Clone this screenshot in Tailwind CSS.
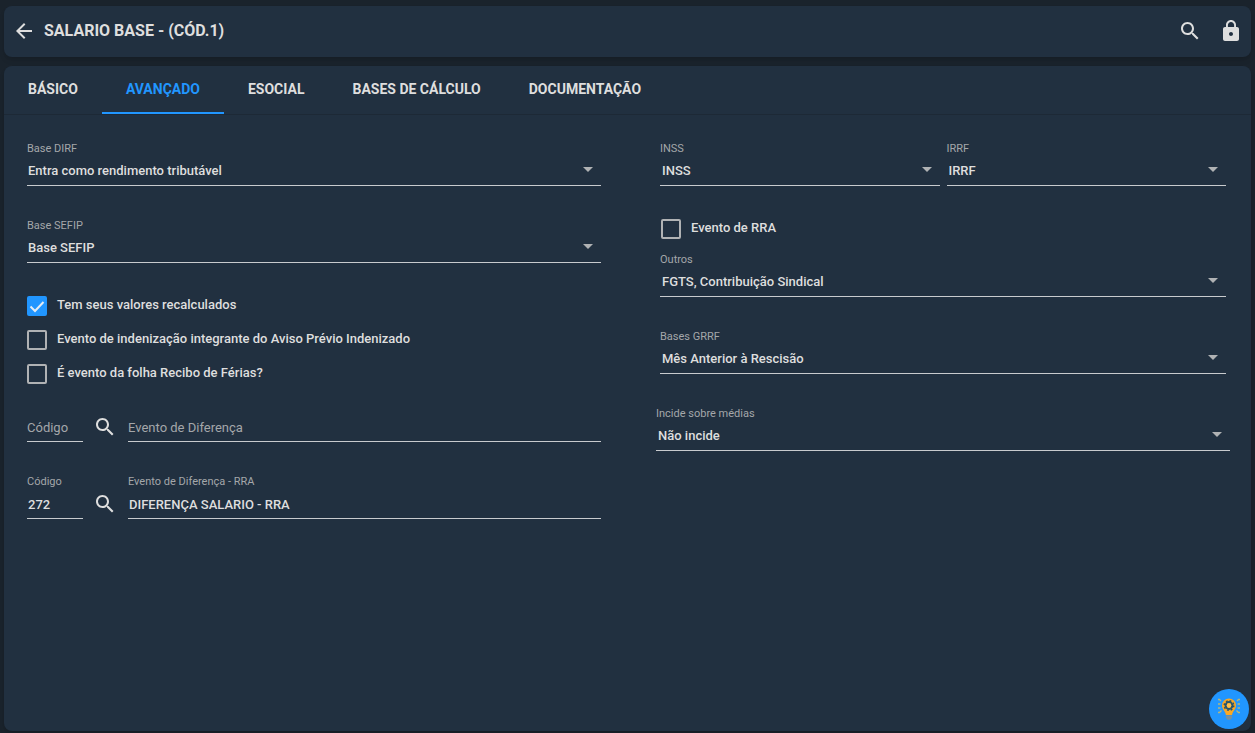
<!DOCTYPE html>
<html lang="pt-BR">
<head>
  <meta charset="UTF-8">
  <meta name="viewport" content="width=device-width, initial-scale=1.0">
  <title>Salario Base</title>
  <script src="https://cdn.jsdelivr.net/npm/@tailwindcss/browser@4"></script>
</head>
<body class="bg-[#1a232c] text-[#dedede] font-['Roboto',sans-serif] text-[13px] min-h-screen flex flex-col gap-[9px] px-1 pt-1.5 pb-0.5">

<header class="h-[51px] shrink-0 flex items-center bg-[#213040] rounded-lg shadow-md px-2 pb-0.5">
  <button type="button" aria-label="Voltar">
    <svg class="w-6 h-6" viewBox="0 0 24 24" fill="currentColor"><path d="M20 11H7.83l5.59-5.59L12 4l-8 8 8 8 1.41-1.41L7.83 13H20v-2z"/></svg>
  </button>
  <h1 class="ml-2 text-base leading-6 font-bold">SALARIO BASE - (CÓD.1)</h1>
  <div class="ml-auto flex gap-[17px]">
    <button type="button" aria-label="Pesquisar">
      <svg class="w-6 h-6" viewBox="0 0 24 24" fill="currentColor"><path d="M15.5 14h-.79l-.28-.27C15.41 12.59 16 11.11 16 9.5 16 5.91 13.09 3 9.5 3S3 5.91 3 9.5 5.91 16 9.5 16c1.61 0 3.09-.59 4.23-1.57l.27.28v.79l5 4.99L20.49 19l-4.99-5zm-6 0C7.01 14 5 11.99 5 9.5S7.01 5 9.5 5 14 7.01 14 9.5 11.99 14 9.5 14z"/></svg>
    </button>
    <button type="button" aria-label="Bloquear">
      <svg class="w-6 h-6" viewBox="0 0 24 24" fill="currentColor"><path d="M18 8h-1V6c0-2.76-2.24-5-5-5S7 3.24 7 6v2H6c-1.1 0-2 .9-2 2v10c0 1.1.9 2 2 2h12c1.1 0 2-.9 2-2V10c0-1.1-.9-2-2-2zm-6 9c-1.1 0-2-.9-2-2s.9-2 2-2 2 .9 2 2-.9 2-2 2zm3.1-9H8.9V6c0-1.71 1.39-3.1 3.1-3.1 1.71 0 3.1 1.39 3.1 3.1v2z"/></svg>
    </button>
  </div>
</header>

<main class="grow bg-[#213040] rounded-lg shadow-md">
  <nav class="flex border-b border-[#1d2936] text-sm font-bold">
    <a href="#basico" class="h-12 px-6 pt-[13px] leading-5">BÁSICO</a>
    <a href="#avancado" class="h-12 px-6 pt-[13px] leading-5 border-b-2 border-[#2196ff] text-[#2196ff]">AVANÇADO</a>
    <a href="#esocial" class="h-12 px-6 pt-[13px] leading-5">ESOCIAL</a>
    <a href="#bases" class="h-12 px-6 pt-[13px] leading-5">BASES DE CÁLCULO</a>
    <a href="#documentacao" class="h-12 px-6 pt-[13px] leading-5">DOCUMENTAÇÃO</a>
  </nav>

  <form class="grid grid-cols-2 gap-x-[55px] pl-[23px] pr-[21px] pt-[25px] pb-10">
    <!-- coluna esquerda -->
    <div class="flex flex-col">
      <div class="relative">
        <label for="baseDirf" class="block text-[11px] leading-[18px] text-[#a4a7aa]">Base DIRF</label>
        <select id="baseDirf" class="block appearance-none w-full h-7 pb-px pl-px pr-6 border-b border-[#c8cbce] font-medium">
          <option>Entra como rendimento tributável</option>
        </select>
        <svg class="absolute right-2 top-[27px] w-2.5 h-[5px] pointer-events-none text-[#b0b2b4]" viewBox="0 0 10 5" fill="currentColor"><path d="M0 0h10L5 5z"/></svg>
      </div>

      <div class="relative mt-[31px]">
        <label for="baseSefip" class="block text-[11px] leading-[18px] text-[#a4a7aa]">Base SEFIP</label>
        <select id="baseSefip" class="block appearance-none w-full h-7 pb-px pl-px pr-6 border-b border-[#c8cbce] font-medium">
          <option>Base SEFIP</option>
        </select>
        <svg class="absolute right-2 top-[27px] w-2.5 h-[5px] pointer-events-none text-[#b0b2b4]" viewBox="0 0 10 5" fill="currentColor"><path d="M0 0h10L5 5z"/></svg>
      </div>

      <div class="mt-[33px] flex flex-col gap-3.5">
        <label class="flex h-5 gap-2.5 leading-[18px] font-medium">
          <span class="relative w-5 h-5">
            <input type="checkbox" checked class="peer block appearance-none w-5 h-5 rounded-xs border-2 border-[#b0b2b4] checked:bg-[#2196ff] checked:border-[#2196ff]">
            <svg class="absolute inset-0 w-5 h-5 hidden peer-checked:block pointer-events-none" viewBox="0 0 20 20" fill="none" stroke="#e4ecf4" stroke-width="2"><path d="M3.500 10.500l4.500 4.500 8.500-9"/></svg>
          </span>
          Tem seus valores recalculados
        </label>
        <label class="flex h-5 gap-2.5 leading-[18px] font-medium">
          <input type="checkbox" class="appearance-none w-5 h-5 rounded-xs border-2 border-[#b0b2b4] checked:bg-[#2196ff]">
          Evento de indenização integrante do Aviso Prévio Indenizado
        </label>
        <label class="flex h-5 gap-2.5 leading-[18px] font-medium">
          <input type="checkbox" class="appearance-none w-5 h-5 rounded-xs border-2 border-[#b0b2b4] checked:bg-[#2196ff]">
          É evento da folha Recibo de Férias?
        </label>
      </div>

      <div class="mt-3 flex gap-2.5">
        <div class="relative w-14 pt-[18px]">
          <label for="codDif" class="absolute left-0 bottom-1 leading-5 text-[#a4a7aa] pointer-events-none">Código</label>
          <input id="codDif" type="text" class="block w-full h-7 border-b border-[#c8cbce] font-medium">
        </div>
        <button type="button" aria-label="Buscar evento" class="w-[25px] h-6 mt-[19px]">
          <svg class="w-6 h-6" viewBox="0 0 24 24" fill="currentColor"><path d="M15.5 14h-.79l-.28-.27C15.41 12.59 16 11.11 16 9.5 16 5.91 13.09 3 9.5 3S3 5.91 3 9.5 5.91 16 9.5 16c1.61 0 3.09-.59 4.23-1.57l.27.28v.79l5 4.99L20.49 19l-4.99-5zm-6 0C7.01 14 5 11.99 5 9.5S7.01 5 9.5 5 14 7.01 14 9.5 11.99 14 9.5 14z"/></svg>
        </button>
        <div class="relative grow pt-[18px]">
          <label for="evtDif" class="absolute left-0 bottom-1 leading-5 text-[#a4a7aa] pointer-events-none">Evento de Diferença</label>
          <input id="evtDif" type="text" class="block w-full h-7 border-b border-[#c8cbce] font-medium">
        </div>
      </div>

      <div class="mt-[31px] flex gap-2.5">
        <div class="w-14">
          <label for="codRra" class="block text-[11px] leading-[18px] text-[#a4a7aa]">Código</label>
          <input id="codRra" type="text" value="272" class="block w-full h-7 pb-px pl-px border-b border-[#c8cbce] font-medium">
        </div>
        <button type="button" aria-label="Buscar evento RRA" class="w-[25px] h-6 mt-[19px]">
          <svg class="w-6 h-6" viewBox="0 0 24 24" fill="currentColor"><path d="M15.5 14h-.79l-.28-.27C15.41 12.59 16 11.11 16 9.5 16 5.91 13.09 3 9.5 3S3 5.91 3 9.5 5.91 16 9.5 16c1.61 0 3.09-.59 4.23-1.57l.27.28v.79l5 4.99L20.49 19l-4.99-5zm-6 0C7.01 14 5 11.99 5 9.5S7.01 5 9.5 5 14 7.01 14 9.5 11.99 14 9.5 14z"/></svg>
        </button>
        <div class="grow">
          <label for="evtRra" class="block text-[11px] leading-[18px] text-[#a4a7aa]">Evento de Diferença - RRA</label>
          <input id="evtRra" type="text" value="DIFERENÇA SALARIO - RRA" class="block w-full h-7 pb-px pl-px border-b border-[#c8cbce] font-medium">
        </div>
      </div>
    </div>

    <!-- coluna direita -->
    <div class="flex flex-col">
      <div class="px-1 grid grid-cols-2 gap-[7px]">
        <div class="relative">
          <label for="inss" class="block text-[11px] leading-[18px] text-[#a4a7aa]">INSS</label>
          <select id="inss" class="block appearance-none w-full h-7 pb-px pl-0.5 pr-6 border-b border-[#c8cbce] font-medium">
            <option>INSS</option>
          </select>
          <svg class="absolute right-2 top-[27px] w-2.5 h-[5px] pointer-events-none text-[#b0b2b4]" viewBox="0 0 10 5" fill="currentColor"><path d="M0 0h10L5 5z"/></svg>
        </div>
        <div class="relative">
          <label for="irrf" class="block text-[11px] leading-[18px] text-[#a4a7aa]">IRRF</label>
          <select id="irrf" class="block appearance-none w-full h-7 pb-px pl-0.5 pr-6 border-b border-[#c8cbce] font-medium">
            <option>IRRF</option>
          </select>
          <svg class="absolute right-2 top-[27px] w-2.5 h-[5px] pointer-events-none text-[#b0b2b4]" viewBox="0 0 10 5" fill="currentColor"><path d="M0 0h10L5 5z"/></svg>
        </div>
      </div>

      <label class="mt-[33px] px-[5px] flex h-5 gap-2.5 leading-[18px] font-medium">
        <input type="checkbox" class="appearance-none w-5 h-5 rounded-xs border-2 border-[#b0b2b4] checked:bg-[#2196ff]">
        Evento de RRA
      </label>

      <div class="mt-3 px-1">
        <div class="relative">
          <label for="outros" class="block text-[11px] leading-[18px] text-[#a4a7aa]">Outros</label>
          <select id="outros" class="block appearance-none w-full h-7 pb-px pl-0.5 pr-6 border-b border-[#c8cbce] font-medium">
            <option>FGTS, Contribuição Sindical</option>
          </select>
          <svg class="absolute right-2 top-[27px] w-2.5 h-[5px] pointer-events-none text-[#b0b2b4]" viewBox="0 0 10 5" fill="currentColor"><path d="M0 0h10L5 5z"/></svg>
        </div>
        <div class="relative mt-[31px]">
          <label for="grrf" class="block text-[11px] leading-[18px] text-[#a4a7aa]">Bases GRRF</label>
          <select id="grrf" class="block appearance-none w-full h-7 pb-px pl-0.5 pr-6 border-b border-[#c8cbce] font-medium">
            <option>Mês Anterior à Rescisão</option>
          </select>
          <svg class="absolute right-2 top-[27px] w-2.5 h-[5px] pointer-events-none text-[#b0b2b4]" viewBox="0 0 10 5" fill="currentColor"><path d="M0 0h10L5 5z"/></svg>
        </div>
      </div>

      <div class="relative mt-[31px]">
        <label for="medias" class="block text-[11px] leading-[18px] text-[#a4a7aa]">Incide sobre médias</label>
        <select id="medias" class="block appearance-none w-full h-7 pb-px pl-0.5 pr-6 border-b border-[#c8cbce] font-medium">
          <option>Não incide</option>
        </select>
        <svg class="absolute right-2 top-[27px] w-2.5 h-[5px] pointer-events-none text-[#b0b2b4]" viewBox="0 0 10 5" fill="currentColor"><path d="M0 0h10L5 5z"/></svg>
      </div>
    </div>
  </form>
</main>

<button type="button" aria-label="Dicas" class="fixed right-1.5 bottom-1 w-10 h-10 rounded-full bg-[#2196ff] flex items-center justify-center">
  <svg class="w-6 h-6" viewBox="0 0 24 24" fill="none">
    <path d="M12 1.500a7 7 0 0 0-7 7c0 4 3.500 5.500 3.900 9.500h6.200c.4-4 3.900-5.500 3.900-9.500a7 7 0 0 0-7-7z" fill="#f9a825"/>
    <path d="M8.900 18.500h6.200v2.300l-1.600 2h-3l-1.600-2z" fill="#78909c"/>
    <circle cx="12" cy="8.500" r="3.400" stroke="#26546f" stroke-width="2"/>
    <circle cx="12" cy="8.500" r="4.800" stroke="#26546f" stroke-width="1.400" stroke-dasharray="1.800 1.970"/>
    <circle cx="12" cy="8.500" r="2.200" fill="#ffc04d"/>
    <path d="M4 4L2.500 2.500H1M3.500 7H1M3.500 11H1M4.500 13.500l-2 2H1M20 4l1.500-1.500H23M20.500 7H23M20.500 11H23M19.500 13.500l2 2H23" stroke="#b3b67c" stroke-width="1.300"/>
  </svg>
</button>

</body>
</html>
